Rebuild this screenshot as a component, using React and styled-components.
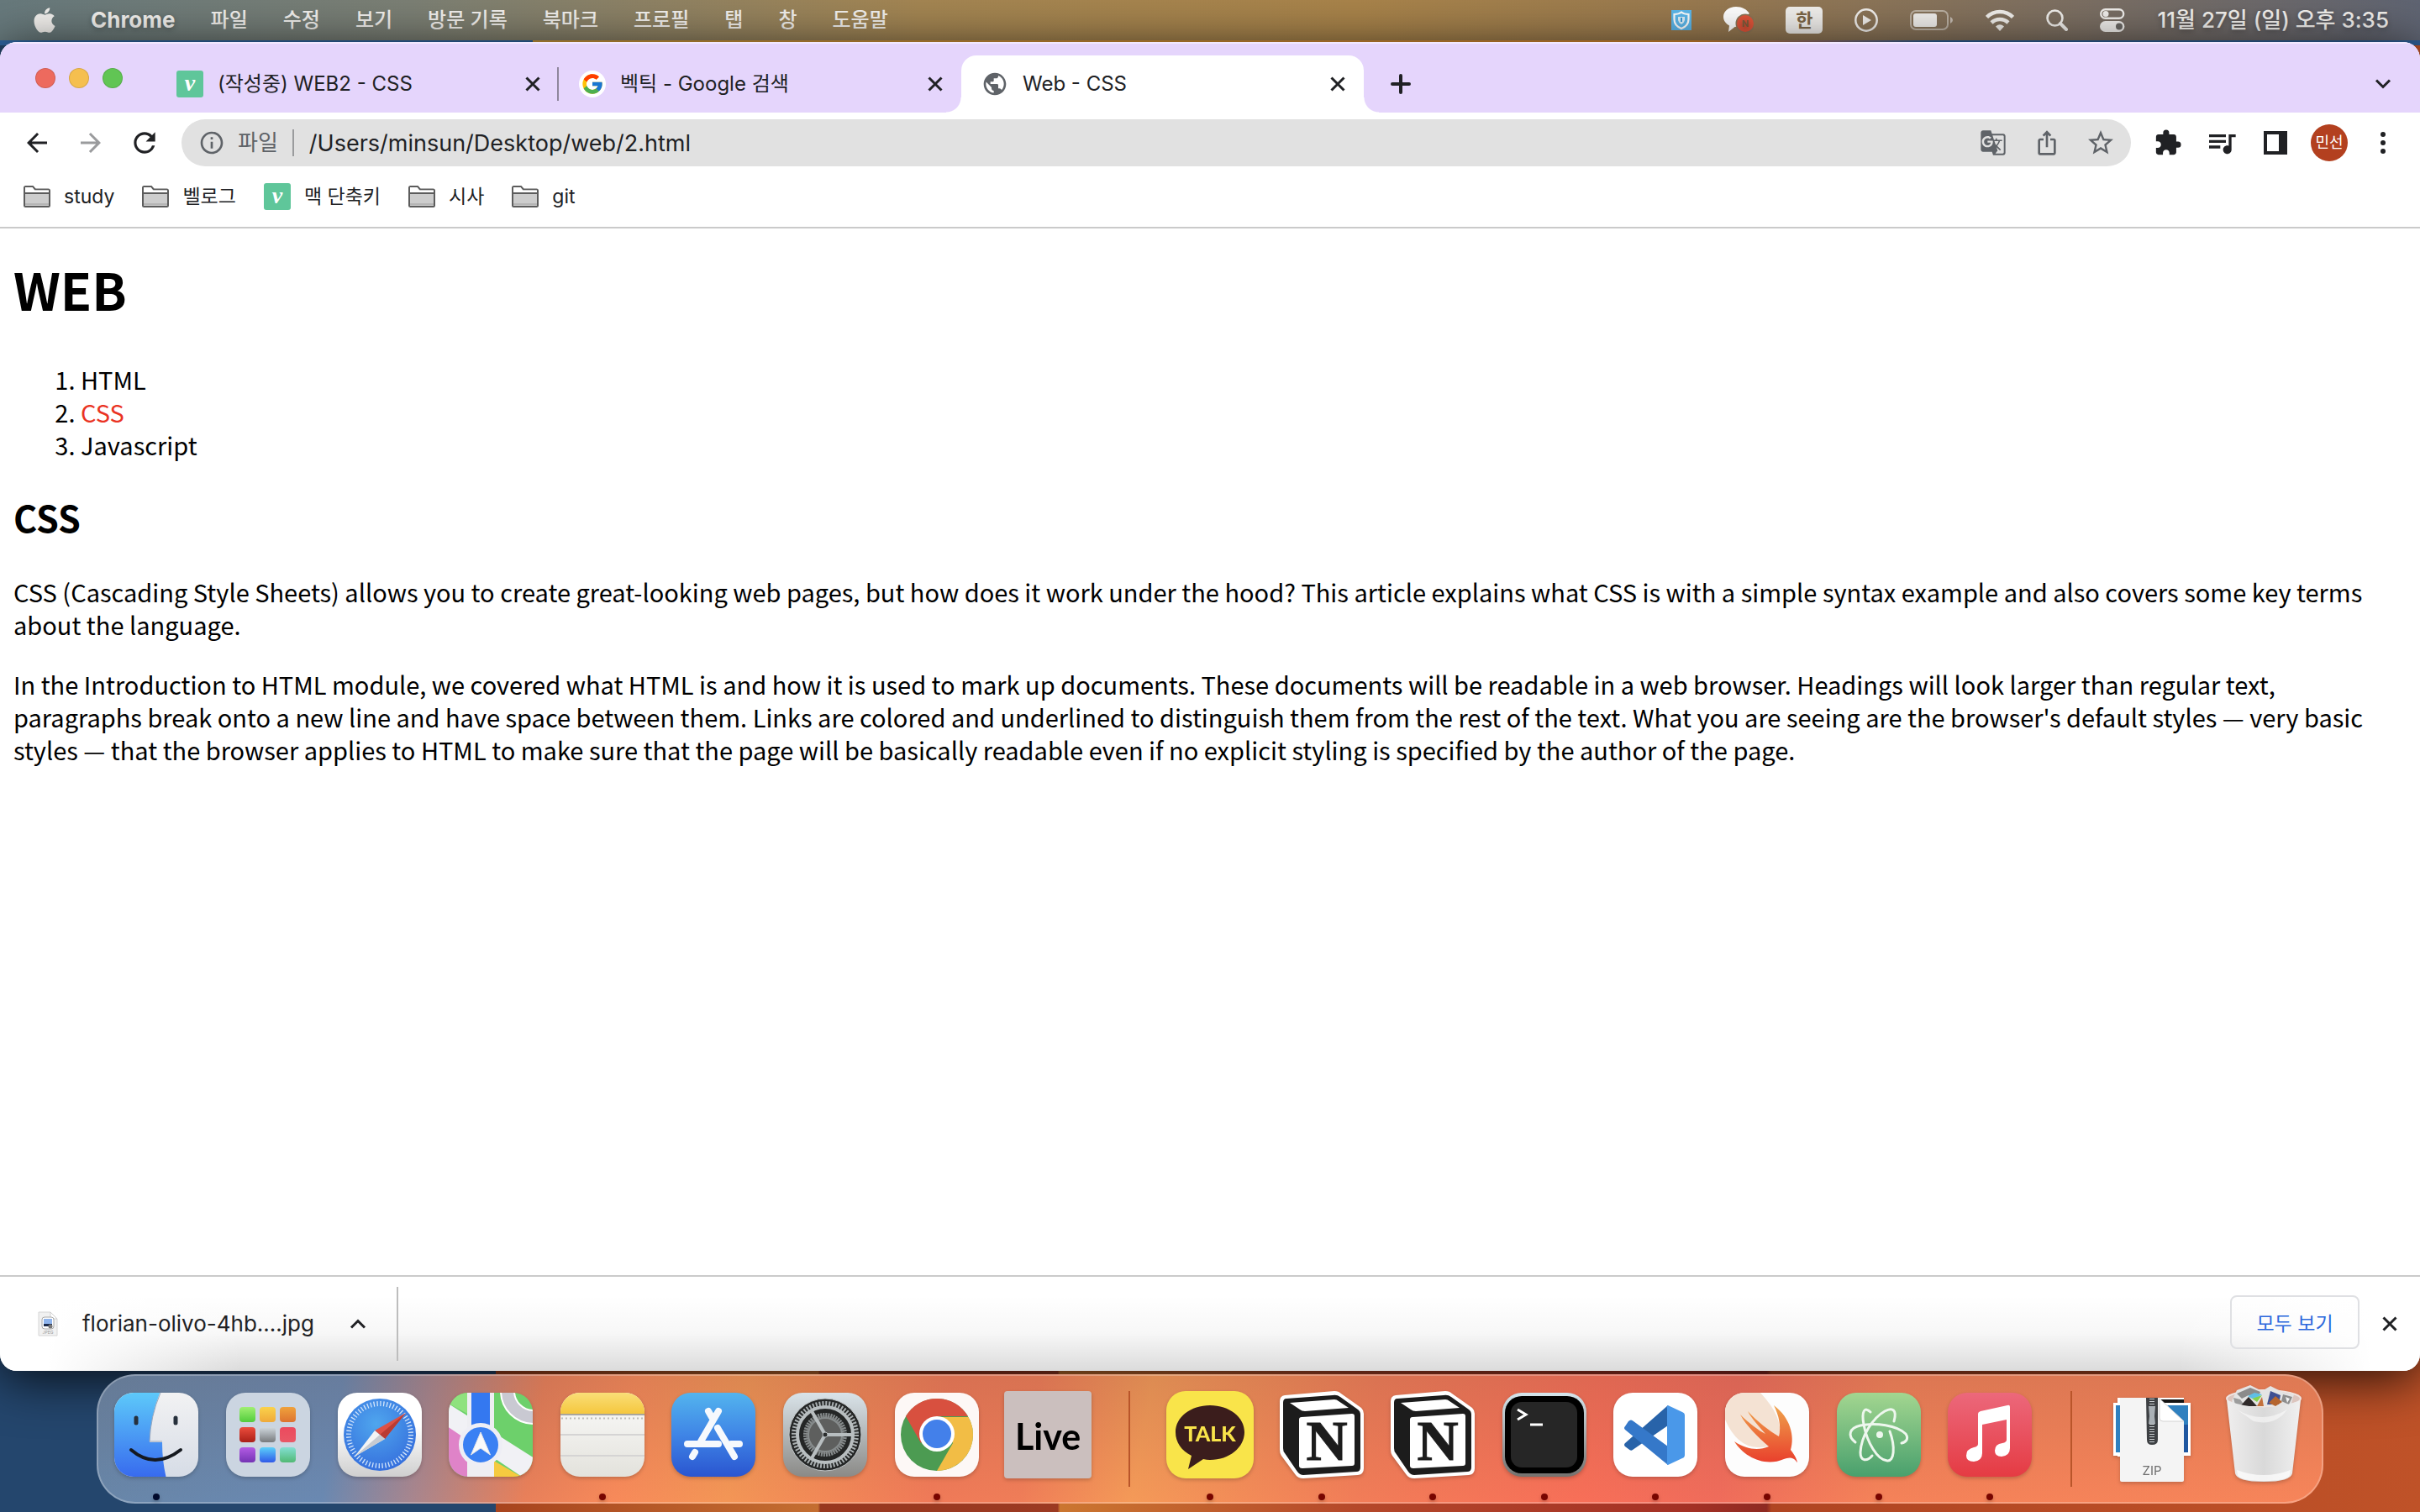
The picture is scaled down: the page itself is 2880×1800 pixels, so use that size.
import React from "react";
import styled, { createGlobalStyle, css } from "styled-components";
import { FaApple } from "react-icons/fa";
import { FcGoogle } from "react-icons/fc";
import {
  MdArrowBack,
  MdArrowForward,
  MdExtension,
  MdGTranslate,
  MdInfoOutline,
  MdIosShare,
  MdPublic,
  MdQueueMusic,
  MdRefresh,
  MdStarBorder,
} from "react-icons/md";


const GlobalStyle = createGlobalStyle`
  * {
    box-sizing: border-box;
  }
  body {
    margin: 0;
    font-family: Inter, "Noto Sans CJK KR", sans-serif;
    font-size: 24px;
    color: #202124;
  }
  button, input {
    font: inherit;
    color: inherit;
    border: 0;
    padding: 0;
    margin: 0;
    background: none;
  }
  svg {
    display: block;
    flex: none;
  }
`;

const menus = ["파일", "수정", "보기", "방문 기록", "북마크", "프로필", "탭", "창", "도움말"];

const bookmarks = [
  { label: "study" },
  { label: "벨로그" },
  { label: "맥 단축키", velog: true },
  { label: "시사" },
  { label: "git" },
];

/* ---------- small icons ---------- */

const Velog = () => (
  <svg width="32" height="32" viewBox="0 0 32 32">
    <rect width="32" height="32" rx="3" fill="#5fc69a" />
    <text x="16" y="24" textAnchor="middle" fontFamily="Liberation Serif, serif" fontStyle="italic" fontWeight="700" fontSize="28" fill="#fff">v</text>
  </svg>
);

const Folder = () => (
  <svg width="32" height="28" viewBox="0 0 32 28">
    <path d="M1 3.5Q1 2 2.500 2H11L14 5.5H29.5Q31 5.5 31 7V24.5Q31 26 29.5 26H2.5Q1 26 1 24.5Z" fill="#cdcdcd" stroke="#5c5c5c" strokeWidth="2" />
    <path d="M2 3H10.5L13 6.5H30V9H2Z" fill="#fff" />
    <path d="M1 10H31" stroke="#5c5c5c" strokeWidth="2" />
    <path d="M2 23H30" stroke="#b5b5b5" strokeWidth="2" />
  </svg>
);

const Cross = () => (
  <svg width="18" height="18" viewBox="0 0 18 18" stroke="#202124" strokeWidth="3">
    <path d="M1.5 1.5L16.5 16.5M16.5 1.5L1.5 16.5" />
  </svg>
);

const Chevron = ({ up }) => (
  <svg width="20" height="14" viewBox="0 0 20 14" fill="none" stroke="#202124" strokeWidth="3">
    <path d={up ? "M2 11.5L10 3.5L18 11.5" : "M2 2.5L10 10.5L18 2.5"} />
  </svg>
);

const Shield = () => (
  <svg width="24" height="24" viewBox="0 0 24 24">
    <rect width="24" height="24" fill="#5cb8ec" />
    <path d="M12 2.5C14.5 4.5 17.5 5 20.5 5V11C20.5 16 17 20 12 22C7 20 3.5 16 3.5 11V5C6.5 5 9.5 4.5 12 2.5Z" fill="none" stroke="#fff" strokeWidth="2.2" />
    <path d="M8 8H16V12Q15.5 15 12 17Q8.5 15 8 12Z" fill="#fff" opacity=".8" />
    <path d="M12 9V14" stroke="#3d9bd8" strokeWidth="2" />
  </svg>
);

const TalkStatus = () => (
  <svg width="36" height="32" viewBox="0 0 36 32">
    <path d="M15 0C6.5 0 0 5.2 0 12C0 16.500 2.8 20.3 7 22.4L6 30L13.5 24L17 23.5L30.8 8C28 3 22 0 15 0Z" fill="#fff" />
    <circle cx="26" cy="20" r="11.5" fill="#8b7557" />
    <circle cx="26" cy="20" r="10" fill="#e2553a" />
    <text x="26" y="24" textAnchor="middle" fontSize="11" fontWeight="700" fill="#7a5c3c">N</text>
  </svg>
);

const Play = () => (
  <svg width="28" height="28" viewBox="0 0 28 28">
    <circle cx="14" cy="14" r="12.7" fill="none" stroke="#f1efec" strokeWidth="2.5" />
    <path d="M10 8L20 14L10 20Z" fill="#f1efec" />
  </svg>
);

const Battery = () => (
  <svg width="52" height="24" viewBox="0 0 52 24">
    <rect x="1" y="1" width="44" height="22" rx="6" fill="none" stroke="#f1efec" strokeOpacity=".5" strokeWidth="2" />
    <rect x="4" y="4" width="28" height="16" rx="3" fill="#f1efec" />
    <path d="M48 8Q51 9.5 51 12Q51 14.5 48 16Z" fill="#f1efec" fillOpacity=".6" />
  </svg>
);

const Wifi = () => (
  <svg width="34" height="26" viewBox="0 0 34 26" fill="none" stroke="#f1efec" strokeWidth="4.5">
    <path d="M1.5 9.5A22 22 0 0 1 32.5 9.5" />
    <path d="M7 16A14.5 14.5 0 0 1 27 16" />
    <path d="M17 26L12 20.5Q17 16 22 20.5Z" fill="#f1efec" stroke="none" />
  </svg>
);

const Search = () => (
  <svg width="26" height="26" viewBox="0 0 26 26" fill="none" stroke="#f1efec">
    <circle cx="10.5" cy="10.5" r="9" strokeWidth="2.6" />
    <path d="M17 17L24 24" strokeWidth="4" strokeLinecap="round" />
  </svg>
);

const Controls = () => (
  <svg width="30" height="28" viewBox="0 0 30 28">
    <rect x="1.2" y="1.2" width="27" height="10.6" rx="5.3" fill="none" stroke="#f1efec" strokeWidth="2.4" />
    <circle cx="7" cy="6.5" r="3.5" fill="#f1efec" />
    <rect y="15" width="29.4" height="13" rx="6.5" fill="#f1efec" />
    <circle cx="23" cy="21.5" r="4" fill="#6b6864" />
  </svg>
);

const SidePanel = () => (
  <svg width="28" height="28" viewBox="0 0 28 28">
    <path d="M0 0H28V28H0ZM4 4V24H18V4Z" fill="#202124" fillRule="evenodd" />
  </svg>
);

const Dots = () => (
  <svg width="28" height="28" viewBox="0 0 28 28" fill="#202124">
    <circle cx="14" cy="4" r="3" />
    <circle cx="14" cy="14" r="3" />
    <circle cx="14" cy="24" r="3" />
  </svg>
);

const Plus = () => (
  <svg width="24" height="24" viewBox="0 0 24 24" stroke="#202124" strokeWidth="4" strokeLinecap="round">
    <path d="M12 2V22M2 12H22" />
  </svg>
);

const JpegFile = () => (
  <svg width="24" height="30" viewBox="0 0 24 30">
    <path d="M1 1H15L23 9V29H1Z" fill="#f1f1f1" stroke="#d6d6d6" />
    <path d="M15 1V9H23Z" fill="#fff" stroke="#d0d0d0" />
    <rect x="5" y="7" width="14" height="14" rx="3" fill="#fff" stroke="#a8a8a8" />
    <rect x="7" y="9" width="10" height="6" fill="#8fb4ec" />
    <path d="M7 15H17V18H7Z" fill="#1d2c4c" />
    <circle cx="15" cy="18" r="2.5" fill="#777" />
    <text x="12" y="27" textAnchor="middle" fontSize="5" fill="#999">JPEG</text>
  </svg>
);

/* ---------- dock icons, all on a 104 grid ---------- */

const Tile = ({ fill }) => <rect x="2" y="2" width="100" height="100" rx="23" fill={fill} />;

const Finder = () => (
  <>
    <defs>
      <linearGradient id="finderBlue" x1="0" y1="0" x2="0" y2="1">
        <stop offset="0" stopColor="#5ecbfa" />
        <stop offset="1" stopColor="#3769ee" />
      </linearGradient>
      <linearGradient id="finderGrey" x1="0" y1="0" x2="0" y2="1">
        <stop offset="0" stopColor="#f2f2f3" />
        <stop offset="1" stopColor="#d6dce6" />
      </linearGradient>
      <clipPath id="tile"><rect x="2" y="2" width="100" height="100" rx="23" /></clipPath>
    </defs>
    <Tile fill="url(#finderGrey)" />
    <path clipPath="url(#tile)" d="M0 0H57Q45 30 44 61H59Q59 84 64 104H0Z" fill="url(#finderBlue)" />
    <path d="M57 2Q45 30 44 60H59" fill="none" stroke="#9aa7bb" strokeWidth="1" />
    <path d="M28 32V38M75 32V38" stroke="#26303c" strokeWidth="5" strokeLinecap="round" />
    <path d="M22 70Q50 94 81 70" fill="none" stroke="#15191f" strokeWidth="4" strokeLinecap="round" />
  </>
);

const padColors = [
  ["#a0ef72", "#52cc3c"], ["#fad24b", "#efa93a"], ["#efa23c", "#dd7330"],
  ["#ec4d3d", "#aa2018"], ["#d0d8de", "#777a7d"], ["#eb4a5e", "#e95866"],
  ["#b35ce4", "#7434b4"], ["#5bd0fa", "#3059e8"], ["#83dfd2", "#51b974"],
];

const Launchpad = () => (
  <>
    <Tile fill="#cbd5e1" />
    {padColors.map(([from, to], i) => (
      <g key={i}>
        <linearGradient id={"pad" + i} x1="0" y1="0" x2="0" y2="1">
          <stop offset="0" stopColor={from} />
          <stop offset="1" stopColor={to} />
        </linearGradient>
        <rect x={18 + (i % 3) * 24} y={19 + Math.floor(i / 3) * 24} width="19" height="18" rx="4" fill={`url(#pad${i})`} />
      </g>
    ))}
  </>
);

const Safari = () => (
  <>
    <defs>
      <linearGradient id="safariRim" x1="0" y1="0" x2="0" y2="1">
        <stop offset=".4" stopColor="#fff" />
        <stop offset="1" stopColor="#cfcfcf" />
      </linearGradient>
      <radialGradient id="safariFace" cx=".45" cy=".35" r=".65">
        <stop offset="0" stopColor="#4fa6ee" />
        <stop offset="1" stopColor="#3670dd" />
      </radialGradient>
    </defs>
    <Tile fill="url(#safariRim)" />
    <circle cx="52" cy="52" r="43" fill="url(#safariFace)" />
    <circle cx="52" cy="52" r="37" fill="none" stroke="#d5e6fb" strokeWidth="6" strokeDasharray="1.3 2.575" />
    <path d="M83 26L58 57L46 47Z" fill="#dc5146" />
    <path d="M83 26L52 52L58 57Z" fill="#b93b33" />
    <path d="M22 78L46 47L58 57Z" fill="#f4f4f4" />
    <path d="M22 78L52 52L58 57Z" fill="#c7cbd1" />
  </>
);

const Maps = () => (
  <g clipPath="url(#tile)">
    <rect width="104" height="104" fill="#6dd06b" />
    <path d="M0 0H26V28L0 14Z" fill="#8fe27e" />
    <path d="M0 40L26 58V104H0Z" fill="#df83c8" />
    <path d="M54 82L92 104H54Z" fill="#f5ca40" />
    <path d="M0 14L104 80V104H92L0 42Z" fill="#f1f1f5" />
    <path d="M24 0H56V104H24Z" fill="#eeeef2" />
    <path d="M29 0H51V50H29Z" fill="#3478f0" />
    <circle cx="103" cy="0" r="31" fill="none" stroke="#fff" strokeWidth="18" />
    <circle cx="103" cy="0" r="31" fill="none" stroke="#c9c9d2" strokeWidth="14" />
    <circle cx="40" cy="64" r="23.5" fill="#3a80f3" stroke="#eeeef5" strokeWidth="5" />
    <path d="M40 49L51.5 76L40 68L28.5 76Z" fill="#fafafa" stroke="#e4e4e8" strokeLinejoin="round" />
  </g>
);

const Notes = () => (
  <>
    <linearGradient id="notesTop" x1="0" y1="0" x2="0" y2="1">
      <stop offset="0" stopColor="#fae07c" />
      <stop offset="1" stopColor="#f5c73e" />
    </linearGradient>
    <linearGradient id="notesPaper" x1="0" y1="0" x2="0" y2="1">
      <stop offset="0" stopColor="#fbfbfa" />
      <stop offset="1" stopColor="#e3e2dc" />
    </linearGradient>
    <Tile fill="url(#notesPaper)" />
    <g clipPath="url(#tile)">
      <rect width="104" height="27" fill="url(#notesTop)" />
      <path d="M0 28H104" stroke="#a9a69d" strokeWidth="2" />
      <path d="M3 32.5H104" stroke="#bdbcb8" strokeWidth="2" strokeDasharray="2 3" />
      <path d="M0 52H104M0 77H104" stroke="#d5d4d4" strokeWidth="2" />
    </g>
  </>
);

const AppStore = () => (
  <>
    <linearGradient id="storeBlue" x1="0" y1="0" x2="0" y2="1">
      <stop offset="0" stopColor="#53b4ee" />
      <stop offset=".5" stopColor="#3f85e6" />
      <stop offset="1" stopColor="#2a55d0" />
    </linearGradient>
    <Tile fill="url(#storeBlue)" />
    <g stroke="#f6f9fd" strokeWidth="8" strokeLinecap="round">
      <path d="M46 24L50 31" />
      <path d="M58 24L37 60" />
      <path d="M21 63H58M73 63H83" />
      <path d="M57 44L77 78" />
      <path d="M30 73L27 78" />
    </g>
  </>
);

const Settings = () => (
  <>
    <linearGradient id="gearPlate" x1="0" y1="0" x2="0" y2="1">
      <stop offset="0" stopColor="#d9e3e9" />
      <stop offset="1" stopColor="#8b8a87" />
    </linearGradient>
    <Tile fill="url(#gearPlate)" />
    <circle cx="52" cy="52" r="43" fill="#242626" stroke="#c0c5c7" strokeWidth="1" />
    <circle cx="52" cy="52" r="37" fill="none" stroke="#a9afb1" strokeWidth="6" strokeDasharray="2 1.875" />
    <circle cx="52" cy="52" r="33" fill="none" stroke="#b8bec0" strokeWidth="4" />
    <circle cx="52" cy="52" r="23" fill="#5e5f5e" stroke="#868b8c" strokeWidth="6" strokeDasharray="2 1" />
    <circle cx="52" cy="52" r="20" fill="none" stroke="#868b8c" strokeWidth="2" />
    <path d="M52 52H84M52 52L36 24M52 52L36 80" stroke="#b8bec0" strokeWidth="4" />
    <circle cx="52" cy="52" r="3" fill="#2b2d2d" stroke="#b8bec0" strokeWidth="1" />
  </>
);

const ChromeLogo = () => (
  <>
    <Tile fill="#fdf8f6" />
    <circle cx="52" cy="52" r="43" fill="#4c9b52" />
    <path d="M15 30A43 43 0 0 1 89 30H52L33 62Z" fill="#d8503f" />
    <path d="M52 31H89.5A43 43 0 0 1 52 95L71 62Z" fill="#f2bd45" />
    <circle cx="52" cy="51" r="21" fill="#fff" />
    <circle cx="52" cy="51" r="17" fill="#4380ea" />
  </>
);

const Live = () => (
  <>
    <rect width="104" height="104" rx="4" fill="#cbbfbe" />
    <text x="52" y="70" textAnchor="middle" fontFamily="Lato, sans-serif" fontWeight="700" fontSize="43" fill="#000">Live</text>
  </>
);

const Talk = () => (
  <>
    <rect width="104" height="104" rx="23" fill="#f9e44a" />
    <path d="M52 17C29 17 11 31 11 49C11 61 18 71 30 77L26 93L44 81Q48 82 52 82C75 82 93 67 93 49C93 31 75 17 52 17Z" fill="#3b1d1c" />
    <text x="52" y="60" textAnchor="middle" fontFamily="Lato, sans-serif" fontWeight="900" fontSize="25" fill="#f9e44a">TALK</text>
  </>
);

const Notion = () => (
  <>
    <path d="M8 5L67 0Q72 0 75 3L99 20Q102 23 102 27V92Q102 99 95 100L30 104Q24 104 21 100L4 77Q2 74 2 70V12Q2 6 8 5Z" fill="#fff" />
    <path d="M10 9L65 5Q70 4 74 7L95 22Q98 24 98 28V91Q98 96 93 96L30 100Q26 100 23 96L8 74Q6 72 6 68V14Q6 9 10 9Z" fill="#1c1c1c" />
    <path d="M14 14L67 10Q70 10 72 12L84 20L32 24Q28 24 26 22Z" fill="#fff" />
    <path d="M28 31L88 27Q91 27 91 30V86Q91 89 88 89L29 92Q25 92 25 89V34Q25 31 28 31Z" fill="#fff" />
    <text x="58" y="82" textAnchor="middle" fontFamily="Liberation Serif, serif" fontWeight="700" fontSize="68" fill="#1c1c1c" stroke="#1c1c1c" strokeWidth="1">N</text>
  </>
);

const Terminal = () => (
  <>
    <linearGradient id="termRim" x1="0" y1="0" x2="0" y2="1">
      <stop offset="0" stopColor="#d5e5ec" />
      <stop offset="1" stopColor="#74716e" />
    </linearGradient>
    <Tile fill="url(#termRim)" />
    <rect x="5" y="6" width="94" height="92" rx="20" fill="#000" />
    <rect x="12" y="13" width="79" height="78" rx="13" fill="#262626" />
    <path d="M20 22L30 28L20 34" fill="none" stroke="#fff" strokeWidth="3" />
    <path d="M35 40H50" stroke="#fff" strokeWidth="3" />
  </>
);

const VsCode = () => (
  <>
    <Tile fill="#fff" />
    <path d="M16 62L67 17V41L25 70Q23 72 20 69L16 66Q14 64 16 62Z" fill="#2863a9" />
    <path d="M16 42L20 36Q23 33 26 36L67 66V88L16 46Q14 44 16 42Z" fill="#3578c9" />
    <path d="M67 17L84 25Q87 26 87 29V76Q87 79 84 80L67 88Q65 87 66 84V21Q65 18 67 17Z" fill="#4a98e9" />
  </>
);

const Swift = () => (
  <>
    <linearGradient id="swiftBird" x1="0" y1="0" x2="0" y2="1">
      <stop offset="0" stopColor="#efa44c" />
      <stop offset="1" stopColor="#e93f2c" />
    </linearGradient>
    <Tile fill="#fdfdfd" />
    <path clipPath="url(#tile)" d="M2 2H44Q72 32 66 54Q62 68 40 67Q16 66 2 34Z" fill="#f4e2d3" />
    <path d="M60 17C80 32 85 54 80 70C88 80 89 88 87 84C82 77 76 80 72 81C49 91 24 78 13 60C28 70 42 71 54 66C41 55 27 41 20 28C30 38 42 47 50 51C43 43 33 32 29 24C41 37 54 47 66 54C69 42 66 29 60 17Z" fill="url(#swiftBird)" />
  </>
);

const Atom = () => (
  <>
    <linearGradient id="atomGreen" x1="0" y1="0" x2="0" y2="1">
      <stop offset="0" stopColor="#a3d690" />
      <stop offset="1" stopColor="#49a06d" />
    </linearGradient>
    <Tile fill="url(#atomGreen)" />
    <g fill="none" stroke="#eef7ee" strokeWidth="3" strokeLinecap="round">
      <path d="M24 61C14 53 17 44 30 41C48 37 74 41 84 51C88 57 84 61 79 62" />
      <path d="M42 25C35 18 31 24 34 40C38 61 50 82 62 83C70 84 72 67 65 48" />
      <path d="M70 36C74 22 68 19 59 24C45 32 31 53 30 73C30 84 38 84 44 77" />
    </g>
    <circle cx="53" cy="52" r="4" fill="#eef7ee" />
  </>
);

const Music = () => (
  <>
    <linearGradient id="musicRed" x1="0" y1="0" x2="0" y2="1">
      <stop offset="0" stopColor="#ec687b" />
      <stop offset="1" stopColor="#e53b43" />
    </linearGradient>
    <Tile fill="url(#musicRed)" />
    <path d="M38 27Q38 25 41 24L73 17Q76 16 76 19V68Q76 77 66 78Q58 78 58 71Q58 63 67 62Q72 61 72 58V34L43 40V74Q43 83 33 84Q24 84 24 77Q24 69 33 67Q38 66 38 63Z" fill="#fff" />
  </>
);

const ZipFile = () => (
  <>
    <path d="M11 8H90V78H11Z" fill="#fff" />
    <rect x="6" y="14" width="92" height="63" fill="#fff" />
    <rect x="9" y="17" width="86" height="56" fill="#2f80bf" />
    <path d="M80 40H95V73H80Z" fill="#1f57a0" />
    <path d="M62 10H90V14H62Z" fill="#141414" />
    <path d="M14 8H60L90 36V106Q90 108 88 108H16Q14 108 14 106Z" fill="#f4f4f4" />
    <path d="M61 9L90 36H65Q61 36 61 32Z" fill="#fff" stroke="#d4d4d4" />
    <path d="M45 8H59V58Q59 64 52 64Q46 64 46 58Z" fill="#3d4043" />
    <path d="M52 9V62" stroke="#c8cdd0" strokeWidth="6" strokeDasharray="1 2" />
    <path d="M48 18H56L55 30L56 39H48L49 30Z" fill="#a9b0b5" />
    <text x="52" y="100" textAnchor="middle" fontSize="15" fill="#6f6f6f">ZIP</text>
  </>
);

const Trash = () => (
  <>
    <linearGradient id="bin" x1="0" y1="0" x2="1" y2="0">
      <stop offset="0" stopColor="#efeeee" />
      <stop offset=".5" stopColor="#d9d9d9" />
      <stop offset="1" stopColor="#f0f0f0" />
    </linearGradient>
    <ellipse cx="52" cy="9" rx="44" ry="10" fill="#dcc5be" stroke="#efe5e2" strokeWidth="2" />
    <path d="M14 12L20 -1L36 -7L50 0L60 -6L76 2L88 4L84 18H18Z" fill="#e4e4e4" />
    <path d="M20 3L36 -4L48 1L46 6L34 5L26 9Z" fill="#8b8b8b" />
    <path d="M16 8L24 10L30 18L18 16Z" fill="#9c9c9c" />
    <path d="M24 18L34 7L44 18Z" fill="#2f2a2a" />
    <path d="M33 6L41 2L50 4L44 8L38 9Z" fill="#5fbfe6" />
    <path d="M38 9L50 5L44 13Z" fill="#86d24e" />
    <path d="M44 18L50 7L52 18Z" fill="#c4713c" />
    <path d="M56 16L60 0L72 5L70 16Z" fill="#3f4f92" />
    <path d="M58 14L66 6L74 13L66 18Z" fill="#b5652f" />
    <path d="M75 4L86 7L82 16L73 12Z" fill="#8d8d8d" />
    <path d="M78 7L83 9L80 14Z" fill="#f2f2f2" />
    <path d="M8 11Q52 28 96 11L86 98Q84 108 52 108Q20 108 18 98Z" fill="url(#bin)" />
    <path d="M20 22Q50 40 80 22Q66 42 40 36Z" fill="#fff" opacity=".5" />
    <path d="M20 94Q52 106 84 94L83 100Q80 107 52 107Q24 107 21 100Z" fill="#fff" opacity=".7" />
  </>
);

const dockItems = [
  { name: "Finder", icon: Finder, running: true },
  { name: "Launchpad", icon: Launchpad },
  { name: "Safari", icon: Safari },
  { name: "지도", icon: Maps },
  { name: "메모", icon: Notes, running: true },
  { name: "App Store", icon: AppStore },
  { name: "시스템 설정", icon: Settings },
  { name: "Chrome", icon: ChromeLogo, running: true },
  { name: "Live", icon: Live },
  { divider: true },
  { name: "KakaoTalk", icon: Talk, running: true },
  { name: "Notion", icon: Notion, running: true },
  { name: "Notion 2", icon: Notion, running: true },
  { name: "터미널", icon: Terminal, running: true },
  { name: "Code", icon: VsCode, running: true },
  { name: "Swift Playgrounds", icon: Swift, running: true },
  { name: "Atom", icon: Atom, running: true },
  { name: "음악", icon: Music, running: true },
  { divider: true },
  { name: "다운로드", icon: ZipFile },
  { name: "휴지통", icon: Trash },
];

const App = () => {
  return (
    <Desktop>
      <GlobalStyle />
      <MenuBar>
        <Apple />
        <AppName>Chrome</AppName>
        {menus.map((m) => (
          <MenuItem key={m}>{m}</MenuItem>
        ))}
        <Status>
          <Shield />
          <TalkStatus />
          <InputSource>한</InputSource>
          <Play />
          <Battery />
          <Wifi />
          <Search />
          <Controls />
          <time>11월 27일 (일) 오후 3:35</time>
        </Status>
      </MenuBar>

      <Window>
        <TabStrip>
          <Lights>
            <Light $color="#ed6a5e" />
            <Light $color="#f5bf4f" />
            <Light $color="#61c554" />
          </Lights>
          <Tab $divided>
            <Velog />
            <TabTitle>(작성중) WEB2 - CSS</TabTitle>
            <PlainButton aria-label="탭 닫기"><Cross /></PlainButton>
          </Tab>
          <Tab>
            <Favicon><FcGoogle size={28} /></Favicon>
            <TabTitle>벡틱 - Google 검색</TabTitle>
            <PlainButton aria-label="탭 닫기"><Cross /></PlainButton>
          </Tab>
          <Tab $active>
            <MdPublic size={32} color="#5f6368" />
            <TabTitle>Web - CSS</TabTitle>
            <PlainButton aria-label="탭 닫기"><Cross /></PlainButton>
          </Tab>
          <NewTab aria-label="새 탭"><Plus /></NewTab>
          <PlainButton aria-label="탭 검색"><Chevron /></PlainButton>
        </TabStrip>

        <Toolbar>
          <Tools>
            <Tool aria-label="뒤로"><MdArrowBack size={36} /></Tool>
            <Tool aria-label="앞으로" $muted><MdArrowForward size={36} /></Tool>
            <Tool aria-label="새로고침"><MdRefresh size={38} /></Tool>
          </Tools>
          <Omnibox>
            <MdInfoOutline size={32} color="#5f6368" />
            <Scheme htmlFor="url">파일</Scheme>
            <Address id="url" defaultValue="/Users/minsun/Desktop/web/2.html" spellCheck={false} />
            <Tool aria-label="번역" $grey><MdGTranslate size={32} /></Tool>
            <Tool aria-label="공유" $grey><MdIosShare size={32} /></Tool>
            <Tool aria-label="북마크에 추가" $grey><MdStarBorder size={36} /></Tool>
          </Omnibox>
          <Tools>
            <Tool aria-label="확장 프로그램"><MdExtension size={34} /></Tool>
            <Tool aria-label="미디어"><MdQueueMusic size={40} /></Tool>
            <Tool aria-label="사이드 패널"><SidePanel /></Tool>
            <Tool><Avatar>민선</Avatar></Tool>
            <Tool aria-label="메뉴"><Dots /></Tool>
          </Tools>
        </Toolbar>

        <Bookmarks>
          {bookmarks.map((b) => (
            <Bookmark key={b.label} href="#">
              {b.velog ? <Velog /> : <Folder />}
              {b.label}
            </Bookmark>
          ))}
        </Bookmarks>

        <Page>
          <h1>WEB</h1>
          <ol>
            <li><PageLink href="#html">HTML</PageLink></li>
            <li><PageLink href="#css" $current>CSS</PageLink></li>
            <li><PageLink href="#js">Javascript</PageLink></li>
          </ol>
          <h2>CSS</h2>
          <p>
            CSS (Cascading Style Sheets) allows you to create great-looking web pages, but how does it work under the hood? This article explains what CSS is with a simple syntax example and also covers some key terms about the language.
          </p>
          <p>
            In the Introduction to HTML module, we covered what HTML is and how it is used to mark up documents. These documents will be readable in a web browser. Headings will look larger than regular text, paragraphs break onto a new line and have space between them. Links are colored and underlined to distinguish them from the rest of the text. What you are seeing are the browser's default styles — very basic styles — that the browser applies to HTML to make sure that the page will be basically readable even if no explicit styling is specified by the author of the page.
          </p>
        </Page>

        <Downloads>
          <Download>
            <JpegFile />
            <FileName>florian-olivo-4hb....jpg</FileName>
            <PlainButton aria-label="옵션"><Chevron up /></PlainButton>
          </Download>
          <ShowAll>모두 보기</ShowAll>
          <PlainButton aria-label="닫기"><Cross /></PlainButton>
        </Downloads>
      </Window>

      <Dock>
        {dockItems.map((item, i) =>
          item.divider ? (
            <DockDivider key={i} />
          ) : (
            <DockItem key={i} aria-label={item.name}>
              <svg width="104" height="104" viewBox="0 0 104 104" overflow="visible">
                <item.icon />
              </svg>
              {item.running && <Running $dark={i === 0} />}
            </DockItem>
          )
        )}
      </Dock>
    </Desktop>
  );
};

const Desktop = styled.div`
  min-height: 100vh;
  display: flex;
  flex-direction: column;
  overflow: hidden;
  background:
    linear-gradient(90deg, #2f66a3 22%, #cf9a3c 22%, #d9882f 70%, #8f6a68 75%, #2f5f98 80%) top / 100% 54px no-repeat,
    linear-gradient(90deg, #24466d 20.5%, #a8441e 20.5%, #c46e31 33.8%, #98381f 33.9%, #9c3a22 43.7%, #cb7630 43.8%, #b5482a 56%, #a33025 70%, #8e2a22 73%, #b04522 73.2%, #bf5228 100%);
`;

const MenuBar = styled.header`
  height: 48px;
  padding: 0 37px 0 40px;
  display: flex;
  align-items: center;
  gap: 42px;
  color: #f3f1ee;
  font-size: 24px;
  font-weight: 500;
  line-height: 36px;
  white-space: nowrap;
  text-shadow: 0 2px 6px rgba(0, 0, 0, 0.3);
  background: linear-gradient(90deg, #67797c, #7b7f74 17%, #a38552 38%, #a8834a 56%, #98794f 70%, #7f7060 84%, #5f6472);
`;

const Apple = styled(FaApple)`
  width: 26px;
  height: 34px;
`;

const AppName = styled.strong`
  font-size: 26px;
`;

const MenuItem = styled.button``;

const Status = styled.div`
  margin-left: auto;
  display: flex;
  align-items: center;
  gap: 38px;
  font-size: 26px;
`;

const InputSource = styled.span`
  width: 44px;
  height: 32px;
  border-radius: 5px;
  background: #f1efec;
  color: #7d6748;
  font-size: 22px;
  font-weight: 700;
  line-height: 32px;
  text-align: center;
  text-shadow: none;
`;

const Window = styled.div`
  flex: 1;
  margin-top: 2px;
  display: flex;
  flex-direction: column;
  border-radius: 20px;
  overflow: hidden;
  background: #fff;
  box-shadow: 0 10px 60px rgba(0, 0, 0, 0.8);
`;

const PlainButton = styled.button`
  flex: none;
`;

const TabStrip = styled.div`
  height: 84px;
  padding: 14px 34px 0 42px;
  display: flex;
  align-items: center;
  background: #e5d5fc;
  border-top: 2px solid #f1e8fe;
`;

const Lights = styled.div`
  width: 144px;
  display: flex;
  gap: 16px;
  margin-bottom: 14px;
`;

const Light = styled.span`
  width: 24px;
  height: 24px;
  border-radius: 50%;
  border: 1px solid rgba(0, 0, 0, 0.12);
  background: ${(p) => p.$color};
`;

const Tab = styled.div`
  position: relative;
  flex: 0 1 479px;
  height: 100%;
  padding: 0 22px 0 24px;
  display: flex;
  align-items: center;
  gap: 17px;

  ${(p) =>
    p.$divided &&
    css`
      background: linear-gradient(#8f869c, #8f869c) right / 2px 40px no-repeat;
    `}

  ${(p) =>
    p.$active &&
    css`
      background: #fff;
      border-radius: 18px 18px 0 0;
      &::before,
      &::after {
        content: "";
        position: absolute;
        bottom: 0;
        width: 18px;
        height: 18px;
      }
      &::before {
        right: 100%;
        background: radial-gradient(circle at 0 0, transparent 17px, #fff 18px);
      }
      &::after {
        left: 100%;
        background: radial-gradient(circle at 100% 0, transparent 17px, #fff 18px);
      }
    `}
`;

const TabTitle = styled.span`
  flex: 1;
  line-height: 36px;
  white-space: nowrap;
`;

const Favicon = styled.span`
  width: 32px;
  height: 32px;
  display: grid;
  place-items: center;
  border-radius: 50%;
  background: #fff;
`;

const NewTab = styled(PlainButton)`
  margin: 0 auto 0 32px;
`;

const Toolbar = styled.div`
  height: 72px;
  padding: 0 12px;
  display: flex;
  align-items: center;
  gap: 12px;
`;

const Tools = styled.div`
  display: flex;
`;

const Tool = styled.button`
  width: 64px;
  height: 56px;
  display: grid;
  place-items: center;
  color: ${(p) => (p.$muted ? "#9a9b9d" : p.$grey ? "#5f6368" : "#202124")};
`;

const Omnibox = styled.div`
  flex: 1;
  height: 56px;
  padding: 0 4px 0 20px;
  display: flex;
  align-items: center;
  border-radius: 28px;
  background: #e1e1e1;
  font-size: 27px;
`;

const Scheme = styled.label`
  margin: 0 18px 0 15px;
  padding-right: 17px;
  line-height: 32px;
  border-right: 2px solid #9a9b9d;
  color: #5f6368;
  font-size: 26px;
`;

const Address = styled.input`
  flex: 1;
  min-width: 0;
  outline: 0;
`;

const Avatar = styled.span`
  width: 44px;
  height: 44px;
  border-radius: 50%;
  background: #b3401f;
  color: #fff;
  font-size: 18px;
  line-height: 44px;
  text-align: center;
`;

const Bookmarks = styled.nav`
  height: 66px;
  padding: 0 28px 8px;
  display: flex;
  align-items: center;
  gap: 33px;
  border-bottom: 2px solid #cacaca;
  font-size: 23px;
`;

const Bookmark = styled.a`
  display: flex;
  align-items: center;
  gap: 16px;
  color: #202124;
  line-height: 36px;
  text-decoration: none;
`;

const Page = styled.main`
  flex: 1;
  padding: 32px 16px;
  color: #000;
  font-family: "Noto Sans CJK KR", sans-serif;
  font-size: 29px;
  line-height: 39px;

  h1 {
    margin: 0 0 48px;
    font-size: 61px;
    line-height: 80px;
  }
  ol {
    margin: 0;
    padding-left: 80px;
  }
  h2 {
    margin: 38px 0 42px;
    font-size: 43px;
    line-height: 56px;
  }
  p {
    margin: 0 0 32px;
  }
`;

const PageLink = styled.a`
  color: ${(p) => (p.$current ? "#ea3323" : "#000")};
  text-decoration: none;
`;

const Downloads = styled.footer`
  height: 114px;
  padding-right: 27px;
  display: flex;
  align-items: center;
  gap: 27px;
  border-top: 2px solid #cacaca;
  background:
    linear-gradient(90deg, #fff 2%, transparent 10%, transparent 90%, #fff 98%),
    linear-gradient(transparent 20%, rgba(0, 0, 0, 0.03) 60%, rgba(0, 0, 0, 0.14));
`;

const Download = styled.div`
  height: 88px;
  margin-right: auto;
  padding: 0 36px 0 45px;
  display: flex;
  align-items: center;
  border-right: 2px solid #bdbdbd;
`;

const FileName = styled.span`
  margin: 0 42px 0 29px;
  font-size: 26px;
  line-height: 36px;
`;

const ShowAll = styled.button`
  width: 154px;
  height: 64px;
  margin-bottom: 4px;
  border: 2px solid #dfe0e3;
  border-radius: 8px;
  color: #2c68dc;
  font-size: 23px;
`;

const Dock = styled.nav`
  height: 154px;
  width: calc(100% - 230px);
  margin: 4px auto 10px;
  padding: 18px 3px 0;
  display: flex;
  border: 2px solid rgba(255, 255, 255, 0.25);
  border-radius: 46px;
  position: relative;
  background:
    linear-gradient(rgba(90, 60, 50, 0.16), transparent),
    linear-gradient(100deg, #6886a8, #6a89b2 11%, #a8868f 15%, #e9805a 20%, #f88a5a 24%, #f49656 29%, #f07a58 38%, #f07d58 42%, #f59a58 47%, #f27d58 57%, #f86f58 67%, #f06c5b 73%, #f58259 80%, #f7855a);
  background-origin: border-box;
`;

const DockItem = styled.button`
  flex: 1;
  display: flex;
  flex-direction: column;
  align-items: center;
  gap: 18px;
  filter: drop-shadow(0 2px 2px rgba(0, 0, 0, 0.2));
`;

const Running = styled.span`
  width: 8px;
  height: 8px;
  border-radius: 50%;
  background: ${(p) => (p.$dark ? "#020a2c" : "#780500")};
`;

const DockDivider = styled.span`
  width: 60px;
  height: 114px;
  background: linear-gradient(#b9552a, #b9552a) center / 2px 100% no-repeat;
`;

export default App;
